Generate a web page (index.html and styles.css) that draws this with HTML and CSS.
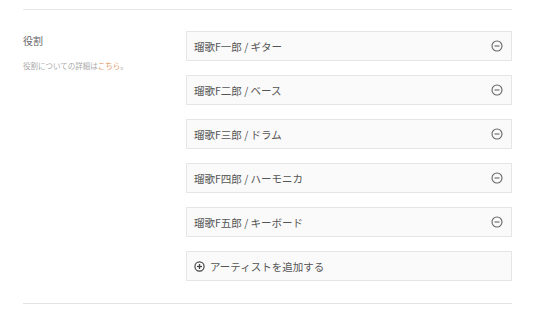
FILE: index.html
```html
<!DOCTYPE html>
<html lang="ja">
<head>
    <meta charset="UTF-8">
    <title>役割</title>
    <link rel="stylesheet" href="styles.css">
</head>
<body>
    <div class="section">
        <div class="field">
            <div class="field-label">
                <h3>役割</h3>
                <p class="help">役割についての詳細は<a href="#">こちら</a>。</p>
            </div>
            <div class="artist-list">
                <div class="artist-item">
                    <span>瑠歌F一郎 / ギター</span>
                    <svg class="icon" width="12" height="12" viewBox="0 0 12 12"><circle cx="6" cy="6" r="5" fill="none" stroke="#666" stroke-width="1.1"/><line x1="3.5" y1="6" x2="8.5" y2="6" stroke="#666" stroke-width="1.1"/></svg>
                </div>
                <div class="artist-item">
                    <span>瑠歌F二郎 / ベース</span>
                    <svg class="icon" width="12" height="12" viewBox="0 0 12 12"><circle cx="6" cy="6" r="5" fill="none" stroke="#666" stroke-width="1.1"/><line x1="3.5" y1="6" x2="8.5" y2="6" stroke="#666" stroke-width="1.1"/></svg>
                </div>
                <div class="artist-item">
                    <span>瑠歌F三郎 / ドラム</span>
                    <svg class="icon" width="12" height="12" viewBox="0 0 12 12"><circle cx="6" cy="6" r="5" fill="none" stroke="#666" stroke-width="1.1"/><line x1="3.5" y1="6" x2="8.5" y2="6" stroke="#666" stroke-width="1.1"/></svg>
                </div>
                <div class="artist-item">
                    <span>瑠歌F四郎 / ハーモニカ</span>
                    <svg class="icon" width="12" height="12" viewBox="0 0 12 12"><circle cx="6" cy="6" r="5" fill="none" stroke="#666" stroke-width="1.1"/><line x1="3.5" y1="6" x2="8.5" y2="6" stroke="#666" stroke-width="1.1"/></svg>
                </div>
                <div class="artist-item">
                    <span>瑠歌F五郎 / キーボード</span>
                    <svg class="icon" width="12" height="12" viewBox="0 0 12 12"><circle cx="6" cy="6" r="5" fill="none" stroke="#666" stroke-width="1.1"/><line x1="3.5" y1="6" x2="8.5" y2="6" stroke="#666" stroke-width="1.1"/></svg>
                </div>
                <a href="#" class="artist-item add-artist">
                    <svg width="11" height="11" viewBox="0 0 12 12"><circle cx="6" cy="6" r="5" fill="none" stroke="#444" stroke-width="1.3"/><line x1="3.3" y1="6" x2="8.7" y2="6" stroke="#444" stroke-width="1.4"/><line x1="6" y1="3.3" x2="6" y2="8.7" stroke="#444" stroke-width="1.4"/></svg>
                    <span>アーティストを追加する</span>
                </a>
            </div>
        </div>
    </div>
</body>
</html>
```

FILE: styles.css
```css
* {
    margin: 0;
    padding: 0;
    box-sizing: border-box;
}

body {
    font-family: "Noto Sans CJK JP", "Noto Sans", sans-serif;
    background: #fff;
    color: #555;
}

.section {
    margin: 9px 24px 0 23px;
    border-top: 1px solid #e8e8e8;
    border-bottom: 1px solid #e3e3e3;
}

.field {
    display: flex;
    padding: 21px 0 22px;
}

.field-label {
    width: 163px;
    flex-shrink: 0;
}

.field-label h3 {
    font-size: 10px;
    font-weight: normal;
    color: #666;
    line-height: 16px;
    margin-top: 2px;
}

.help {
    font-size: 7.5px;
    color: #aaa;
    line-height: 12px;
    margin-top: 11px;
}

.help a {
    color: #e59c6a;
    text-decoration: none;
}

.artist-list {
    flex: 1;
    display: flex;
    flex-direction: column;
    gap: 14px;
}

.artist-item {
    display: flex;
    align-items: center;
    justify-content: space-between;
    height: 30px;
    padding: 0 8px 0 7px;
    background: #fafafa;
    border: 1px solid #e6e6e6;
    font-size: 10.5px;
    color: #555;
    text-decoration: none;
}

.artist-item .icon {
    flex-shrink: 0;
}

.add-artist {
    justify-content: flex-start;
    gap: 5px;
}
```
